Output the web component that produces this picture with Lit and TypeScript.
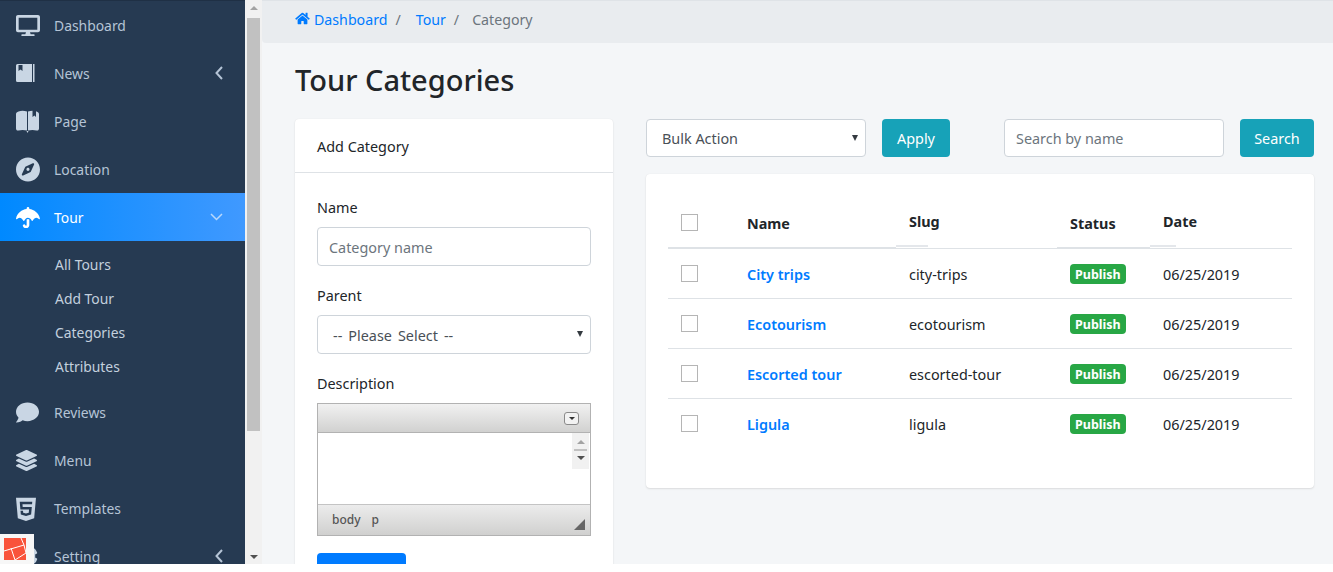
import { LitElement, html, css, svg } from 'lit';
import { customElement } from 'lit/decorators.js';

const icons = {
  desktop: svg`<svg viewBox="0 0 576 512"><path d="M528 0H48C21.5 0 0 21.5 0 48v320c0 26.5 21.5 48 48 48h192l-16 48h-72c-13.3 0-24 10.7-24 24s10.7 24 24 24h272c13.3 0 24-10.7 24-24s-10.7-24-24-24h-72l-16-48h192c26.5 0 48-21.5 48-48V48c0-26.5-21.5-48-48-48zm-16 352H64V64h448v288z"/></svg>`,
  book: svg`<svg viewBox="0 0 19 18"><path fill-rule="evenodd" d="M1.500 0H16v18H1.500A1.500 1.500 0 0 1 0 16.500v-15A1.500 1.500 0 0 1 1.500 0zM2.500 1v6L4.500 5.500 6.500 7V1z"/><rect x="17" width="1.500" height="18"/></svg>`,
  page: svg`<svg viewBox="0 0 23 23"><path fill-rule="evenodd" d="M2.500 1.500C5 .5 8 .5 11 1.500V20.500C8 19.800 5 19.800 2.500 20.500 1 20.800 0 20 0 18.500V4C0 2.800 1 2 2.500 1.500zM12 1.500C13.500 1 15 .7 16.500.7V7L18.500 5.500 20 7V1.200L20.500 1.500C22 2 23 2.800 23 4V18.500C23 20 22 20.800 20.500 20.500 18 19.800 15 19.800 12 20.500zM10.500 21H12.500L11.500 23z"/></svg>`,
  compass: svg`<svg viewBox="0 0 496 512"><path d="M225.38 233.37c-12.5 12.5-12.5 32.76 0 45.25 12.49 12.5 32.76 12.5 45.25 0 12.5-12.5 12.5-32.76 0-45.25-12.5-12.49-32.76-12.49-45.25 0zM248 8C111.03 8 0 119.03 0 256s111.03 248 248 248 248-111.03 248-248S384.97 8 248 8zm126.14 148.05L308.17 300.4a31.938 31.938 0 0 1-15.77 15.77l-144.34 65.97c-16.65 7.61-33.81-9.55-26.2-26.2l65.98-144.35a31.938 31.938 0 0 1 15.77-15.77l144.34-65.97c16.65-7.6 33.8 9.55 26.19 26.2z"/></svg>`,
  umbrella: svg`<svg viewBox="0 0 576 512"><path d="M575.7 280.8C547.1 144.5 437.3 62.6 320 49.9V32c0-17.7-14.3-32-32-32s-32 14.3-32 32v17.9C138.3 62.6 29.5 144.5.3 280.8c-2.2 10.1 8.5 21.3 18.7 11.4 52-55 107.7-52.4 158.6 37 5.3 9.5 14.9 8.6 19.7 0 20.2-35.4 44.9-73.2 90.7-73.2 58.5 0 83.3 56.5 90.7 73.2 4.8 8.6 14.4 9.5 19.7 0 51-89.5 107.1-91.4 158.6-37 10.3 10 20.9-1.3 18.7-11.4zM256 301.7V432c0 8.8-7.2 16-16 16-7.8 0-13.2-5.3-15.1-10.7-5.9-16.7-24.1-25.4-40.8-19.5-16.7 5.9-25.4 24.2-19.5 40.8 11.2 31.9 41.6 53.3 75.4 53.3 44.1 0 80-35.9 80-80V301.6c-9.1-7.9-19.8-13.6-32-13.6-12.3 0-23 5.8-32 13.7z"/></svg>`,
  comment: svg`<svg viewBox="0 0 512 512"><path d="M256 32C114.6 32 0 125.1 0 240c0 49.6 21.4 95 57 130.7C44.5 421.1 2.7 466 2.2 466.5c-2.2 2.3-2.8 5.7-1.5 8.7S4.8 480 8 480c66.3 0 116-31.8 140.6-51.4 32.7 12.3 69 19.4 107.4 19.4 141.4 0 256-93.1 256-208S397.4 32 256 32z"/></svg>`,
  layers: svg`<svg viewBox="0 0 512 512"><path d="M12.41 148.02l232.94 105.67c6.8 3.09 14.49 3.09 21.29 0l232.94-105.67c16.55-7.51 16.55-32.52 0-40.03L266.65 2.31a25.607 25.607 0 0 0-21.29 0L12.41 107.98c-16.55 7.51-16.55 32.53 0 40.04zm487.18 88.28l-58.09-26.33-161.64 73.27c-7.56 3.43-15.59 5.17-23.86 5.17s-16.29-1.74-23.86-5.17L70.51 209.97l-58.1 26.33c-16.55 7.5-16.55 32.5 0 40l232.94 105.59c6.8 3.08 14.49 3.08 21.29 0L499.59 276.3c16.55-7.5 16.55-32.5 0-40zm0 127.8l-57.87-26.23-161.86 73.37c-7.56 3.43-15.59 5.17-23.86 5.17s-16.29-1.74-23.86-5.17L70.29 337.87 12.41 364.1c-16.55 7.5-16.55 32.5 0 40l232.94 105.59c6.8 3.08 14.49 3.08 21.29 0L499.59 404.1c16.55-7.5 16.55-32.5 0-40z"/></svg>`,
  html5: svg`<svg viewBox="0 0 384 512"><path d="M0 32l34.9 395.8L191.5 480l157.6-52.2L384 32H0zm308.2 127.9H124.4l4.1 49.4h175.6l-13.6 148.4-97.9 27v.3h-1.1l-98.7-27.3-6-75.8h47.7L138 320l53.5 14.5 53.7-14.5 6-62.2H84.3L71.5 112.2h241.1l-4.400 47.700z"/></svg>`,
  cog: svg`<svg viewBox="0 0 512 512"><path d="M487.4 315.7l-42.6-24.6c4.3-23.2 4.3-47 0-70.2l42.6-24.6c4.9-2.8 7.1-8.6 5.5-14-11.1-35.6-30-67.8-54.7-94.6-3.8-4.1-10-5.1-14.8-2.3L380.8 110c-17.9-15.4-38.5-27.3-60.8-35.1V25.800c0-5.6-3.9-10.5-9.4-11.7-36.7-8.200-74.300-7.800-109.200 0-5.500 1.200-9.400 6.100-9.400 11.700V75c-22.200 7.900-42.800 19.800-60.800 35.100L88.700 85.500c-4.900-2.800-11-1.900-14.800 2.300-24.700 26.700-43.600 58.900-54.700 94.600-1.700 5.400.6 11.200 5.500 14L67.300 221c-4.300 23.200-4.300 47 0 70.200l-42.600 24.600c-4.900 2.800-7.100 8.600-5.500 14 11.100 35.600 30 67.800 54.700 94.600 3.800 4.100 10 5.100 14.800 2.300l42.600-24.600c17.900 15.400 38.500 27.300 60.800 35.100v49.200c0 5.600 3.900 10.500 9.400 11.700 36.700 8.200 74.300 7.800 109.200 0 5.500-1.200 9.400-6.100 9.400-11.700v-49.200c22.200-7.900 42.800-19.800 60.800-35.100l42.600 24.600c4.900 2.800 11 1.900 14.800-2.300 24.700-26.700 43.600-58.900 54.700-94.600 1.500-5.500-.7-11.300-5.600-14.100zM256 336c-44.100 0-80-35.900-80-80s35.900-80 80-80 80 35.900 80 80-35.900 80-80 80z"/></svg>`,
  home: svg`<svg viewBox="0 0 576 512"><path d="M280.37 148.26L96 300.11V464a16 16 0 0 0 16 16l112.06-.29a16 16 0 0 0 15.92-16V368a16 16 0 0 1 16-16h64a16 16 0 0 1 16 16v95.64a16 16 0 0 0 16 16.05L464 480a16 16 0 0 0 16-16V300L295.67 148.26a12.19 12.19 0 0 0-15.3 0zM571.6 251.47L488 182.56V44.05a12 12 0 0 0-12-12h-56a12 12 0 0 0-12 12v72.61L318.47 43a48 48 0 0 0-61 0L4.34 251.47a12 12 0 0 0-1.6 16.9l25.5 31A12 12 0 0 0 45.15 301l235.22-193.74a12.19 12.19 0 0 1 15.3 0L530.9 301a12 12 0 0 0 16.9-1.6l25.5-31a12 12 0 0 0-1.7-16.93z"/></svg>`,
};

const chevronLeft = svg`<svg class="chev" width="8" height="14" viewBox="0 0 8 14"><path d="M7 1 1.500 7 7 13" fill="none" stroke="currentColor" stroke-width="2"/></svg>`;
const chevronDown = svg`<svg class="chev" width="13" height="8" viewBox="0 0 13 8"><path d="M1 1l5.500 5.500L12 1" fill="none" stroke="currentColor" stroke-width="1.500"/></svg>`;

const rows = [
  { name: 'City trips', slug: 'city-trips' },
  { name: 'Ecotourism', slug: 'ecotourism' },
  { name: 'Escorted tour', slug: 'escorted-tour' },
  { name: 'Ligula', slug: 'ligula' },
];

@customElement('app-root')
export class AppRoot extends LitElement {
  static styles = css`
    :host {
      display: block;
      height: 572px;
      overflow: hidden;
      background: #fff;
      font-family: 'Noto Sans', 'Open Sans', sans-serif;
      font-size: 14.4px;
      color: #212529;
    }

    .frame {
      display: flex;
      height: 564px;
      overflow: hidden;
      position: relative;
    }

    /* sidebar */
    .sidebar {
      width: 245px;
      flex: none;
      background: #263a52;
      border-top: 1px solid #1f3045;
      box-sizing: border-box;
      color: #b5c4d6;
      font-size: 13.900px;
    }

    .item {
      display: flex;
      align-items: center;
      height: 48px;
      padding: 0 22px 0 16px;
      box-sizing: border-box;
    }

    .item .ico {
      width: 38px;
      flex: none;
      display: flex;
      align-items: center;
    }

    .item svg:not(.chev) {
      display: block;
      fill: #c9d6e4;
    }

    .item .label {
      flex: 1;
    }

    .item.active {
      background: linear-gradient(to right, #0089ff, #4099ff);
      color: #fff;
    }

    .item.active svg:not(.chev) {
      fill: #fff;
    }

    .item.active .chev {
      color: #b9d8fb;
    }

    .sub {
      padding: 7px 0 4px 55px;
    }

    .sub div {
      height: 34px;
      line-height: 34px;
      color: #c3d0de;
    }

    .laravel {
      position: absolute;
      left: 0;
      top: 534px;
      width: 34px;
      height: 30px;
      background: #f7f7f7;
      padding: 4px 0 0 4px;
      box-sizing: border-box;
    }

    .laravel svg {
      display: block;
    }

    /* page scrollbar */
    .scroll {
      width: 17px;
      flex: none;
      background: #f1f1f1;
      display: flex;
      flex-direction: column;
      align-items: center;
    }

    .scroll .thumb {
      width: 13px;
      height: 413px;
      margin-top: 8px;
      background: #c1c1c1;
    }

    .tri-up,
    .tri-down {
      width: 0;
      height: 0;
      border-left: 4px solid transparent;
      border-right: 4px solid transparent;
    }

    .tri-up {
      border-bottom: 4px solid #a3a3a3;
      margin-top: 6px;
    }

    .tri-down {
      border-top: 4px solid #505050;
      margin-top: auto;
      margin-bottom: 5px;
    }

    /* main */
    .main {
      flex: 1;
      min-width: 0;
      background: #f4f6f8;
    }

    .crumbs {
      height: 43px;
      box-sizing: border-box;
      background: #e9ecef;
      border-top: 1px solid #dfe3e7;
      border-bottom-left-radius: 4px;
      padding: 0 0 6px 33px;
      display: flex;
      align-items: center;
      color: #6c757d;
      font-size: 14.2px;
      gap: 8px;
    }

    .crumbs a,
    td a {
      color: #007bff;
      text-decoration: none;
    }

    .crumbs svg {
      width: 15px;
      height: 13px;
      fill: #007bff;
      margin-right: 4px;
    }

    .crumbs .sep {
      margin-right: 7px;
    }

    .crumbs .sep.tight {
      margin-right: 5px;
    }

    .content {
      padding: 0 19px 0 33px;
    }

    h1 {
      margin: 0;
      padding-top: 17px;
      height: 76px;
      box-sizing: border-box;
      font-size: 29px;
      line-height: 40px;
      font-weight: 500;
    }

    .cols {
      display: grid;
      grid-template-columns: 318px 668px;
      gap: 33px;
      align-items: start;
    }

    .card {
      background: #fff;
      border-radius: 4px;
      box-shadow: 0 1px 2px rgba(0, 0, 0, 0.1), 0 0 1px rgba(0, 0, 0, 0.08);
    }

    .card-head {
      height: 54px;
      box-sizing: border-box;
      border-bottom: 1px solid #dee2e6;
      padding: 2px 22px 0;
      display: flex;
      align-items: center;
    }

    .form {
      padding: 25px 22px 0;
    }

    label {
      display: block;
      height: 29px;
      line-height: 20px;
    }

    .field {
      height: 39px;
      width: 100%;
      box-sizing: border-box;
      border: 1px solid #ced4da;
      border-radius: 4px;
      background: #fff;
      padding: 1px 11px 0;
      font: inherit;
      color: #495057;
      outline: none;
      display: block;
    }

    .field::placeholder {
      color: #6c757d;
    }

    .group {
      margin-bottom: 20px;
    }

    .select {
      position: relative;
    }

    .select select {
      appearance: none;
      padding-left: 15px;
    }

    .select.parent select {
      word-spacing: 2.3px;
    }

    .select::after {
      content: '';
      position: absolute;
      right: 8px;
      top: 16px;
      border-left: 3.500px solid transparent;
      border-right: 3.500px solid transparent;
      border-top: 6px solid #343a40;
    }

    /* rich text editor */
    .editor {
      border: 1px solid #b2b2b2;
      height: 133px;
      box-sizing: border-box;
      display: flex;
      flex-direction: column;
    }

    .editor-top {
      height: 29px;
      flex: none;
      box-sizing: border-box;
      border-bottom: 1px solid #b2b2b2;
      background: linear-gradient(#f1f1f1, #d1d1d0);
      display: flex;
      align-items: center;
      justify-content: flex-end;
      padding-right: 11px;
    }

    .menu-btn {
      width: 13px;
      height: 11px;
      border: 1px solid #8a8a8a;
      border-radius: 3px;
      display: flex;
      align-items: center;
      justify-content: center;
      background: #f2f2f2;
    }

    .menu-btn i {
      border-left: 3px solid transparent;
      border-right: 3px solid transparent;
      border-top: 3px solid #333;
    }

    .editor-body {
      flex: 1;
      display: flex;
      justify-content: flex-end;
      padding-right: 1px;
    }

    .mini-scroll {
      width: 17px;
      height: 36px;
      background: #f1f1f1;
      display: flex;
      flex-direction: column;
      align-items: center;
    }

    .mini-scroll .tri-up {
      margin-top: 7px;
    }

    .mini-scroll .bar {
      width: 13px;
      height: 2px;
      background: #c1c1c1;
      margin-top: 5px;
    }

    .mini-scroll .tri-down {
      margin: 5px 0 0;
    }

    .editor-foot {
      height: 31px;
      flex: none;
      box-sizing: border-box;
      border-top: 1px solid #c4c4c4;
      background: linear-gradient(#ececec, #d0d0cf);
      display: flex;
      align-items: center;
      padding: 0 0 2px 14px;
      gap: 11px;
      font-size: 12px;
      font-weight: 500;
      color: #555;
      position: relative;
    }

    .grip {
      position: absolute;
      right: 5px;
      bottom: 5px;
      width: 0;
      height: 0;
      border-left: 11px solid transparent;
      border-bottom: 11px solid #666;
    }

    .save {
      display: block;
      margin-top: 17px;
      width: 89px;
      height: 38px;
      border: 0;
      border-radius: 4px;
      background: #007bff;
    }

    /* list */
    .toolbar {
      display: flex;
      height: 38px;
      margin-bottom: 17px;
    }

    .toolbar .field {
      height: 38px;
      padding-top: 0;
    }

    .toolbar .select {
      width: 220px;
    }

    .btn {
      height: 38px;
      border: 0;
      border-radius: 4px;
      background: #17a2b8;
      color: #fff;
      font: inherit;
    }

    .apply {
      width: 68px;
      margin-left: 16px;
    }

    .toolbar .search {
      width: 220px;
      margin-left: auto;
    }

    .go {
      width: 74px;
      margin-left: 16px;
    }

    .list {
      height: 314px;
      padding: 24px 22px 0;
      box-sizing: border-box;
    }

    table {
      width: 624px;
      table-layout: fixed;
      border-collapse: collapse;
    }

    th {
      height: 50px;
      padding: 0;
      border-bottom: 1px solid #dee2e6;
      vertical-align: bottom;
      text-align: left;
      font-weight: 700;
    }

    th .t {
      display: block;
      padding-left: 13px;
      height: 33px;
      line-height: 20px;
      margin-top: -1px;
    }

    th .rule {
      display: block;
      height: 1px;
      background: #dee2e6;
    }

    th .rule.short {
      height: 2px;
      background: #e4e7eb;
      margin-bottom: 1px;
    }

    th .t.up {
      height: 33px;
    }

    td {
      height: 50px;
      box-sizing: border-box;
      padding: 2px 0 0 13px;
      border-bottom: 1px solid #dee2e6;
    }

    td.flat {
      padding-top: 0;
    }

    tr:last-child td {
      border-bottom: 0;
    }

    td a {
      font-weight: 600;
    }

    .check {
      width: 17px;
      height: 17px;
      box-sizing: border-box;
      border: 1px solid #b5b5b5;
      background: #fff;
      display: block;
    }

    .badge {
      display: inline-block;
      background: #28a745;
      color: #fff;
      border-radius: 4px;
      font-size: 12.500px;
      font-weight: 700;
      line-height: 21px;
      height: 20px;
      padding: 0 5px;
      vertical-align: middle;
    }
  `;

  private item(icon: unknown, w: number, h: number, label: string, chev?: unknown, active = false) {
    return html`
      <div class="item ${active ? 'active' : ''}">
        <span class="ico"><span style="width:${w}px;height:${h}px">${icon}</span></span>
        <span class="label">${label}</span>
        ${chev ?? ''}
      </div>
    `;
  }

  render() {
    return html`
      <div class="frame">
        <nav class="sidebar">
          ${this.item(icons.desktop, 24, 21, 'Dashboard')}
          ${this.item(icons.book, 19, 18, 'News', chevronLeft)}
          ${this.item(icons.page, 23, 23, 'Page')}
          ${this.item(icons.compass, 24, 24, 'Location')}
          ${this.item(icons.umbrella, 24, 21, 'Tour', chevronDown, true)}
          <div class="sub">
            <div>All Tours</div>
            <div>Add Tour</div>
            <div>Categories</div>
            <div>Attributes</div>
          </div>
          ${this.item(icons.comment, 23, 23, 'Reviews')}
          ${this.item(icons.layers, 21, 21, 'Menu')}
          ${this.item(icons.html5, 20, 24, 'Templates')}
          ${this.item(icons.cog, 22, 22, 'Setting', chevronLeft)}
        </nav>
        <div class="scroll">
          <i class="tri-up"></i>
          <div class="thumb"></div>
          <i class="tri-down"></i>
        </div>
        <main class="main">
          <div class="crumbs">
            <a href="#">${icons.home}Dashboard</a><span class="sep">/</span>
            <a href="#">Tour</a><span class="sep tight">/</span>
            <span>Category</span>
          </div>
          <div class="content">
            <h1>Tour Categories</h1>
            <div class="cols">
              <section class="card">
                <div class="card-head">Add Category</div>
                <div class="form">
                  <div class="group">
                    <label>Name</label>
                    <input class="field" placeholder="Category name" />
                  </div>
                  <div class="group">
                    <label>Parent</label>
                    <div class="select parent">
                      <select class="field"><option>-- Please Select --</option></select>
                    </div>
                  </div>
                  <div class="group">
                    <label>Description</label>
                    <div class="editor">
                      <div class="editor-top"><span class="menu-btn"><i></i></span></div>
                      <div class="editor-body">
                        <div class="mini-scroll">
                          <i class="tri-up"></i>
                          <div class="bar"></div>
                          <i class="tri-down"></i>
                        </div>
                      </div>
                      <div class="editor-foot">
                        <span>body</span><span>p</span>
                        <i class="grip"></i>
                      </div>
                    </div>
                    <button class="save"></button>
                  </div>
                </div>
              </section>
              <section>
                <div class="toolbar">
                  <div class="select">
                    <select class="field"><option>Bulk Action</option></select>
                  </div>
                  <button class="btn apply">Apply</button>
                  <input class="field search" placeholder="Search by name" />
                  <button class="btn go">Search</button>
                </div>
                <div class="card list">
                  <table>
                    <colgroup>
                      <col style="width:66px" />
                      <col style="width:162px" />
                      <col style="width:161px" />
                      <col style="width:93px" />
                      <col style="width:142px" />
                    </colgroup>
                    <thead>
                      <tr>
                        <th>
                          <span class="t"><span class="check"></span></span>
                          <span class="rule"></span>
                        </th>
                        <th>
                          <span class="t">Name</span>
                          <span class="rule"></span>
                        </th>
                        <th>
                          <span class="t up">Slug</span>
                          <span class="rule short" style="width:32px"></span>
                        </th>
                        <th>
                          <span class="t">Status</span>
                          <span class="rule"></span>
                        </th>
                        <th>
                          <span class="t up">Date</span>
                          <span class="rule short" style="width:26px"></span>
                        </th>
                      </tr>
                    </thead>
                    <tbody>
                      ${rows.map(
                        (r) => html`
                          <tr>
                            <td class="flat"><span class="check"></span></td>
                            <td><a href="#">${r.name}</a></td>
                            <td>${r.slug}</td>
                            <td class="flat"><span class="badge">Publish</span></td>
                            <td>06/25/2019</td>
                          </tr>
                        `
                      )}
                    </tbody>
                  </table>
                </div>
              </section>
            </div>
          </div>
        </main>
        <div class="laravel">
          <svg width="22" height="22" viewBox="0 0 22 22">
            <rect width="22" height="22" fill="#f9533b" />
            <path d="M0 13 20 7M17 0l3 7 2 8-11 7M7 10l4 12" fill="none" stroke="#fff" stroke-width="1" />
          </svg>
        </div>
      </div>
    `;
  }
}
